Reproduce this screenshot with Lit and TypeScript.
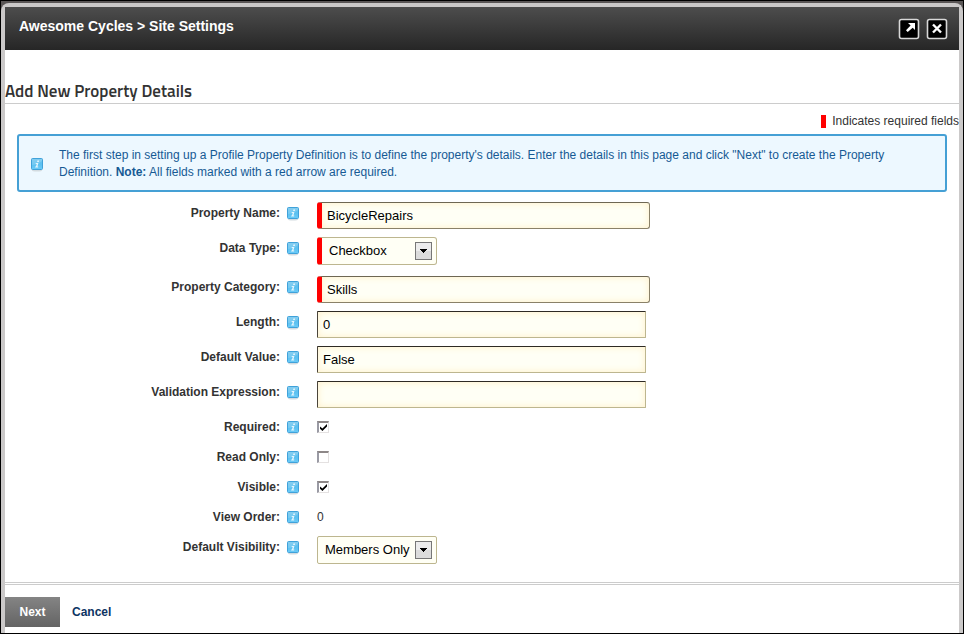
import { LitElement, html, css, nothing } from "lit";
import { customElement, property } from "lit/decorators.js";

const infoIcon = html`<svg class="info" width="14" height="16" viewBox="0 0 14 16" aria-hidden="true">
  <defs>
    <linearGradient id="g" x1="0" y1="0" x2="0" y2="1">
      <stop offset="0" stop-color="#6fc4ec" />
      <stop offset=".5" stop-color="#5bc0f0" />
      <stop offset="1" stop-color="#6bcbf8" />
    </linearGradient>
  </defs>
  <ellipse cx="7" cy="14.5" rx="5" ry="1" fill="#d3dbe0" />
  <rect x="1.5" y="2.5" width="11" height="11" rx="1" fill="url(#g)" stroke="#40a2da" />
  <path d="M2 9 Q7 9 12 5 V3 H2 Z" fill="#fff" opacity=".16" />
  <path d="M7.4 4.6h1.7l-.3 1.3H7.1z M5.8 7h2.6l-1 3.6h.9l-.2.9H5.1l.2-.9h.7l.7-2.7h-1.1z" fill="#e6f6fd" />
</svg>`;

interface Field {
  id: string;
  label: string;
  kind: "text" | "select" | "check" | "value";
  value?: string;
  required?: boolean;
  checked?: boolean;
}

const fields: Field[] = [
  { id: "name", label: "Property Name:", kind: "text", value: "BicycleRepairs", required: true },
  { id: "type", label: "Data Type:", kind: "select", value: "Checkbox", required: true },
  { id: "category", label: "Property Category:", kind: "text", value: "Skills", required: true },
  { id: "length", label: "Length:", kind: "text", value: "0" },
  { id: "default", label: "Default Value:", kind: "text", value: "False" },
  { id: "validation", label: "Validation Expression:", kind: "text", value: "" },
  { id: "required", label: "Required:", kind: "check", checked: true },
  { id: "readonly", label: "Read Only:", kind: "check" },
  { id: "visible", label: "Visible:", kind: "check", checked: true },
  { id: "order", label: "View Order:", kind: "value", value: "0" },
  { id: "visibility", label: "Default Visibility:", kind: "select", value: "Members Only" },
];

@customElement("property-field")
export class PropertyField extends LitElement {
  @property({ attribute: false }) field!: Field;

  static styles = css`
    :host {
      display: grid;
      grid-template-columns: 295px minmax(0, 1fr);
      column-gap: 17px;
      align-items: start;
    }
    .label {
      display: flex;
      justify-content: flex-end;
      align-items: center;
      gap: 6px;
      height: 22px;
      font-weight: bold;
      color: #333;
    }
    .info {
      display: block;
      flex: none;
    }
    .text {
      box-sizing: border-box;
      display: block;
      width: 329px;
      max-width: 100%;
      height: 27px;
      padding: 0 5px;
      border: 1px solid #bdb68f;
      border-top-color: #2e2a24;
      border-left-color: #4a443a;
      border-radius: 1px;
      background: #fffff5;
      box-shadow: inset 0 0 6px 1px #fff3d0;
      font: 13px "Liberation Sans", Arial, sans-serif;
      color: #000;
      outline: 0;
    }
    .text.must {
      width: 333px;
      border: 1px solid #8a8168;
      border-top-color: #6e6753;
      border-left: 5px solid #f00;
      border-radius: 3px;
    }
    .pick {
      display: grid;
      width: 120px;
    }
    .pick.must {
      margin-bottom: 3px;
    }
    .select,
    .arrow {
      grid-area: 1 / 1;
    }
    .select {
      appearance: none;
      box-sizing: border-box;
      width: 100%;
      height: 28px;
      padding: 0 7px 2px;
      border: 1px solid #bdb68f;
      border-radius: 2px;
      background: #fffff5;
      font: 13px "Liberation Sans", Arial, sans-serif;
      color: #000;
    }
    .must .select {
      border-left: 5px solid #f00;
      border-radius: 3px;
    }
    .arrow {
      place-self: center end;
      margin-right: 5px;
      pointer-events: none;
    }
    .check {
      appearance: none;
      display: grid;
      place-items: center;
      box-sizing: border-box;
      width: 12px;
      height: 12px;
      margin: 5px 0;
      border: 1px solid #e4e1e1;
      border-top: 2px solid #8d8787;
      border-left: 2px solid #9a9aa4;
      background: #fff;
    }
    .check:checked::before {
      content: "";
      width: 7px;
      height: 7px;
      background: #000;
      clip-path: polygon(0 35%, 35% 65%, 100% 0, 100% 35%, 35% 100%, 0 68%);
    }
    .value {
      line-height: 22px;
      color: #333;
    }
  `;

  private control(f: Field) {
    switch (f.kind) {
      case "text":
        return html`<input id=${f.id} class="text ${f.required ? "must" : ""}" type="text" .value=${f.value ?? ""} />`;
      case "select":
        return html`<div class="pick ${f.required ? "must" : ""}">
          <select id=${f.id} class="select">
            <option>${f.value}</option>
          </select>
          <svg class="arrow" width="17" height="18" viewBox="0 0 17 18" aria-hidden="true">
            <rect x=".5" y=".5" width="16" height="17" fill="#dcdcdc" stroke="#777" />
            <rect x="1" y="1" width="15" height="8" fill="#ececec" />
            <path d="M5 7h7v1h-1v1h-1v1H9v1H8v-1H7V9H6V8H5z" fill="#000" />
          </svg>
        </div>`;
      case "check":
        return html`<input id=${f.id} class="check" type="checkbox" ?checked=${f.checked} />`;
      default:
        return html`<output id=${f.id} class="value">${f.value}</output>`;
    }
  }

  render() {
    const f = this.field;
    return f ? html`<label class="label" for=${f.id}>${f.label}${infoIcon}</label>${this.control(f)}` : nothing;
  }
}

@customElement("app-root")
export class AppRoot extends LitElement {
  static styles = css`
    :host {
      display: flex;
      box-sizing: border-box;
      min-height: 100vh;
      padding-top: 2px;
      border: 1px solid #000;
      background: #5a5656;
      font: 12px/17px "Liberation Sans", Arial, sans-serif;
      color: #333;
    }
    .dialog {
      flex: 1;
      min-width: 0;
      border: 4px solid #cbc9c9;
      border-bottom: 0;
      border-radius: 8px 8px 0 0;
      background: #fff;
    }
    .bar {
      display: flex;
      justify-content: space-between;
      height: 43px;
      padding: 0 11px 0 14px;
      background: linear-gradient(#4d4d4d, #262626);
    }
    .title {
      margin: 0;
      font-size: 14px;
      line-height: 38px;
      color: #fff;
    }
    .tools {
      display: flex;
      align-items: center;
      gap: 6px;
    }
    .tool {
      display: block;
      padding: 0;
      border: 0;
      background: none;
    }
    .glyph {
      display: block;
    }
    .heading {
      margin: 30px 0 0;
      border-bottom: 1px solid #ccc;
      font: 600 17px/23px "Titillium Web", Roboto, sans-serif;
      color: #333;
    }
    .legend {
      display: flex;
      justify-content: flex-end;
      align-items: center;
      gap: 6px;
      margin: 9px 0 4px;
    }
    .mark {
      width: 5px;
      height: 13px;
      background: #f00;
    }
    .note {
      display: flex;
      align-items: center;
      gap: 15px;
      margin: 0 12px 10px;
      padding: 11px 40px 9px 11px;
      border: 2px solid #45a0d5;
      border-radius: 3px;
      background: #edf8ff;
      color: #165a94;
    }
    .message {
      margin: 0;
    }
    .info {
      flex: none;
    }
    .fields {
      display: grid;
      gap: 8px;
    }
    .actions {
      display: flex;
      align-items: center;
      gap: 12px;
      margin-top: 18px;
      padding: 12px 0 6px;
      border-top: 3px double #ccc;
    }
    .next {
      width: 55px;
      height: 30px;
      padding: 0;
      border: 0;
      background: linear-gradient(#848484, #646464);
      font: bold 12px "Liberation Sans", Arial, sans-serif;
      color: #fff;
    }
    .cancel {
      font-weight: bold;
      color: #0d3463;
      text-decoration: none;
    }
  `;

  render() {
    return html`<main class="dialog">
      <header class="bar">
        <h1 class="title">Awesome Cycles &gt; Site Settings</h1>
        <div class="tools">
          <button class="tool" aria-label="Maximize">
            <svg class="glyph" width="22" height="22" viewBox="0 0 22 22">
              <rect x="1.5" y="1.5" width="19" height="19" rx="2" fill="#000" stroke="#d8d8d8" stroke-width="1.6" />
              <path d="M10 5h7v7l-2.3-2.3-5 4.3-1.7-1.7 4.6-4.7z" fill="#fff" />
            </svg>
          </button>
          <button class="tool" aria-label="Close">
            <svg class="glyph" width="22" height="22" viewBox="0 0 22 22">
              <rect x="1.5" y="1.5" width="19" height="19" rx="2" fill="#000" stroke="#d8d8d8" stroke-width="1.6" />
              <path d="M7 6.5l8 8M15 6.5l-8 8" fill="none" stroke="#fff" stroke-width="2.4" />
            </svg>
          </button>
        </div>
      </header>
      <h2 class="heading">Add New Property Details</h2>
      <div class="legend"><span class="mark"></span><span>Indicates required fields</span></div>
      <div class="note">
        ${infoIcon}
        <p class="message">
          The first step in setting up a Profile Property Definition is to define the property's details. Enter the
          details in this page and click "Next" to create the Property Definition. <strong>Note:</strong> All fields
          marked with a red arrow are required.
        </p>
      </div>
      <form class="fields">${fields.map((f) => html`<property-field .field=${f}></property-field>`)}</form>
      <footer class="actions">
        <button class="next" type="button">Next</button>
        <a class="cancel" href="#">Cancel</a>
      </footer>
    </main>`;
  }
}
